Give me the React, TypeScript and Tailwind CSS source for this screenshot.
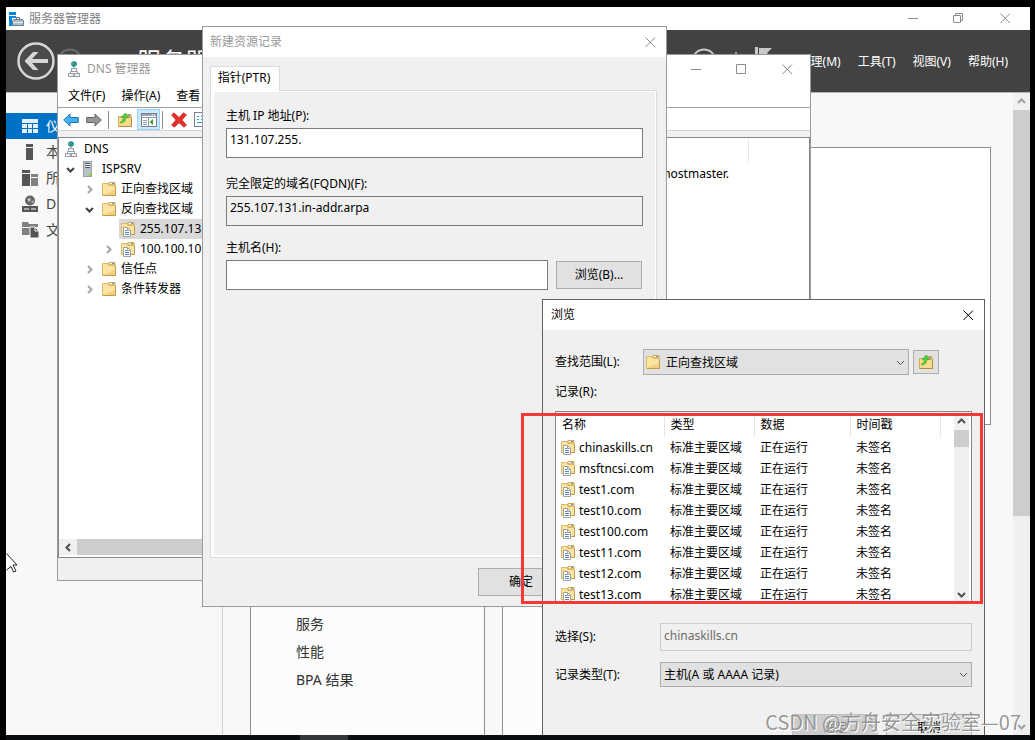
import React from 'react';
import clsx from 'clsx';

interface IconProps {
  className?: string;
}

const FolderIcon: React.FC<IconProps> = ({ className }) => (
  <svg
    viewBox="0 0 14 14"
    className={clsx('h-3.5 w-3.5 shrink-0', className)}
    aria-hidden="true"
  >
    <path d="M5.5 3L7 .5h6V3z" fill="#f0d48a" stroke="#d0aa58" />
    <rect x="8" y="1" width="4" height="1" fill="#fff" />
    <rect x="10" y="1" width="2" height="1" fill="#4c9be8" />
    <path d="M.5 13.5V1.500h5L7 3.500h6.500v10z" fill="#fbe3a2" stroke="#dcb968" />
    <path d="M1 13h12V8z" fill="#f2d080" />
    <path d="M1 13.500h12.500V4" fill="none" stroke="#c39b4c" />
  </svg>
);

const ZoneIcon: React.FC<IconProps> = ({ className }) => (
  <svg
    viewBox="0 0 14 15"
    className={clsx('h-[15px] w-3.5 shrink-0', className)}
    aria-hidden="true"
  >
    <path d="M5.500 3L7 .5h6V3z" fill="#f0d48a" stroke="#d0aa58" />
    <rect x="8" y="1" width="4" height="1" fill="#fff" />
    <rect x="10" y="1" width="2" height="1" fill="#4c9be8" />
    <path d="M.5 12.500V1.500h5L7 3.500h6.500v9z" fill="#fbe3a2" stroke="#dcb968" />
    <path d="M10 12.500h3.500V4" fill="none" stroke="#c39b4c" />
    <path d="M2.500 5.500h4l3 3v6h-7z" fill="#fff" stroke="#a0a0a0" />
    <path d="M6.500 5.500v3h3" fill="none" stroke="#a0a0a0" />
    <path d="M4 8.500h2M4 10.500h4M4 12.500h4" stroke="#4f86c6" />
  </svg>
);

const FolderUpIcon: React.FC = () => (
  <svg viewBox="0 0 16 16" className="h-4 w-4 shrink-0" aria-hidden="true">
    <path d="M8 4V2.500h6V5z" fill="#f0d48a" stroke="#d0aa58" />
    <rect x="11" y="3" width="2" height="1" fill="#4c9be8" />
    <path d="M1.500 14.500v-10h5l1 1h7v9z" fill="#f8da8c" stroke="#d0aa58" />
    <path d="M2 14.500h12.500V6" fill="none" stroke="#b38d40" />
    <path
      d="M3.500 10c2-.5 2.800-2 2.800-4.500H4L8.300 1l3.200 4.500H9c0 3-2.300 5.500-5.500 5.500z"
      fill="#4fd038"
      stroke="#2f9b1e"
      strokeWidth=".5"
    />
  </svg>
);

const NetworkIcon: React.FC = () => (
  <svg viewBox="0 0 12 16" className="h-4 w-3 shrink-0" aria-hidden="true">
    <circle cx="6" cy="3" r="2.800" fill="#1a76b8" />
    <path d="M4 1.500h3l-1 2-2 .5zM6 4l2-.8.4 1.300L7 5.500z" fill="#39c24a" />
    <path d="M6 6v2M2.500 12v-1.500h7V12" fill="none" stroke="#999" />
    <rect x="3.500" y="7.500" width="5" height="3" fill="#eef0f3" stroke="#9aa0a7" />
    <rect x=".5" y="12.500" width="5" height="3" fill="#eef0f3" stroke="#9aa0a7" />
    <rect x="6.500" y="12.500" width="5" height="3" fill="#eef0f3" stroke="#9aa0a7" />
  </svg>
);

const ServerIcon: React.FC = () => (
  <svg viewBox="0 0 9 16" className="h-4 w-[9px] shrink-0" aria-hidden="true">
    <rect x=".5" y=".5" width="8" height="15" fill="#b9c0c6" stroke="#98a1a8" />
    <path d="M2 2.500h5M2 4.500h5M2 6.500h5" stroke="#4f5961" />
    <path d="M2 3.500h5M2 5.500h5" stroke="#eef1f3" />
    <rect x="6" y="13" width="2" height="2" fill="#7be11a" />
  </svg>
);

type Direction = 'up' | 'down' | 'left' | 'right';

const chevronPaths: Record<Direction, string> = {
  up: 'M1 6l3.500-3.500L8 6',
  down: 'M1 3l3.500 3.500L8 3',
  left: 'M6 1L2.500 4.500 6 8',
  right: 'M3 1l3.500 3.500L3 8',
};

const Chevron: React.FC<{
  direction: Direction;
  color?: string;
  width?: number;
}> = ({ direction, color = '#505050', width = 2 }) => (
  <svg viewBox="0 0 9 9" className="h-[9px] w-[9px] shrink-0" aria-hidden="true">
    <path
      d={chevronPaths[direction]}
      fill="none"
      stroke={color}
      strokeWidth={width}
    />
  </svg>
);

type CaptionKind = 'minimize' | 'maximize' | 'restore' | 'close';

const captionPaths: Record<CaptionKind, string> = {
  minimize: 'M0 5.500h10',
  maximize: 'M.5.5h9v9h-9z',
  restore: 'M.5 2.500h7v7h-7zM2.500 2.500v-2h7v7h-2',
  close: 'M.5.5l9.500 9.500M10 .5L.5 10',
};

const CaptionButton: React.FC<{
  kind: CaptionKind;
  color?: string;
  className?: string;
}> = ({ kind, color = '#8c8c8c', className }) => (
  <button
    type="button"
    aria-label={kind}
    className={clsx('flex h-full items-center justify-center', className)}
  >
    <svg viewBox="0 0 11 11" className="h-[11px] w-[11px]">
      <path d={captionPaths[kind]} fill="none" stroke={color} />
    </svg>
  </button>
);

const PushButton: React.FC<{
  children: React.ReactNode;
  disabled?: boolean;
}> = ({ children, disabled }) => (
  <button
    type="button"
    disabled={disabled}
    className={clsx(
      'h-7 w-[86px] shrink-0 border',
      disabled
        ? 'border-[#bfbfbf] bg-[#cccccc] text-[#838383]'
        : 'border-[#adadad] bg-[#e1e1e1]',
    )}
  >
    {children}
  </button>
);

/* ---------- Server manager ---------- */

const navItems = [
  {
    label: '仪表板',
    icon: (
      <path
        d="M0 1h16v4H0zM0 6h5v4H0zM6 6h4v4H6zM11 6h5v4h-5zM0 11h5v4H0zM6 11h4v4H6zM11 11h5v4h-5z"
        fill="#e4f0f9"
      />
    ),
  },
  {
    label: '本地服务器',
    icon: <path d="M4 0h7v3H4zM4 4h7v12H4z" fill="#555" />,
  },
  {
    label: '所有服务器',
    icon: (
      <>
        <path d="M0 0h8v3H0zM0 4h8v12H0z" fill="#555" />
        <path d="M9 4h7v3H9zM9 8h7v8H9z" fill="#808080" />
      </>
    ),
  },
  {
    label: 'DNS',
    icon: (
      <>
        <circle cx="8" cy="4.500" r="5" fill="#666" />
        <path d="M5 3l3-1 1 2-2 2zM9 6l3-2-1 3z" fill="#c4c4c4" />
        <path d="M0 10h16v6H0z" fill="#555" />
        <path d="M2 13h5M9 13h5" stroke="#fff" />
      </>
    ),
  },
  {
    label: '文件和存储服务',
    icon: (
      <>
        <path d="M0 0h6l1 2h9v3H0zM0 6h8v7H0z" fill="#808080" />
        <path d="M8 5h5l4 4v7H8z" fill="#555" stroke="#f8f8f8" />
        <path d="M13 5v4h4" stroke="#f8f8f8" fill="none" />
      </>
    ),
  },
];

const serverMenus = ['管理(M)', '工具(T)', '视图(V)', '帮助(H)'];
const tileLinks = ['服务', '性能', 'BPA 结果'];

const ServerManagerHeader: React.FC = () => (
  <header className="flex h-[62px] shrink-0 items-center bg-[#424242] pl-[11px] pr-[22px] text-white">
    <button type="button" aria-label="后退">
      <svg viewBox="0 0 38 38" className="h-[38px] w-[38px]">
        <circle cx="19" cy="19" r="17.500" fill="#4a4a4a" stroke="#d6d6d6" strokeWidth="2.500" />
        <path
          d="M31 17v4H15l6.500 7h-5.500L7.500 19 16 10h5.500L15 17z"
          fill="#d6d6d6"
        />
      </svg>
    </button>
    <button type="button" aria-label="前进" className="ml-0.5">
      <svg viewBox="0 0 26 26" className="h-[26px] w-[26px]">
        <circle cx="13" cy="13" r="11.500" fill="none" stroke="#6a6a6a" strokeWidth="2" />
      </svg>
    </button>
    <h1 className="ml-[54px] text-[24px]">服务器管理器</h1>
    <div className="ml-auto mr-[26px] flex items-center gap-[18px]">
      <svg viewBox="0 0 26 26" className="h-[26px] w-[26px]" aria-hidden="true">
        <circle cx="13" cy="13" r="11.500" fill="none" stroke="#c8c8c8" strokeWidth="2" />
      </svg>
      <svg viewBox="0 0 38 28" className="h-7 w-[38px]" aria-hidden="true">
        <path d="M0 5h2v20H0z" fill="#9a9a9a" />
        <path d="M20 0h3v26h-3zM24 1h13l-5 5 5 5H24z" fill="#c8c8c8" />
      </svg>
    </div>
    <nav className="flex gap-[17px] pt-0.5">
      {serverMenus.map((menu) => (
        <button key={menu} type="button">
          {menu}
        </button>
      ))}
    </nav>
  </header>
);

const Tile: React.FC<{ links: string[] }> = ({ links }) => (
  <section className="w-[235px] shrink-0 border border-[#8f8f8f] bg-[#fcfcfc] pl-[45px] pt-[148px] text-sm text-[#333]">
    <ul>
      {links.map((link) => (
        <li key={link} className="h-7 leading-7">
          {link}
        </li>
      ))}
    </ul>
  </section>
);

const ServerManager: React.FC = () => (
  <div className="flex min-h-0 flex-1 flex-col bg-[#f8f8f8]">
    <div className="flex h-[23px] shrink-0 items-center bg-white text-[#808080]">
      <svg viewBox="0 0 16 16" className="ml-[3px] h-4 w-4" aria-hidden="true">
        <path d="M0 1h7v3H0zM0 5h7v2H3v8H0z" fill="#0c86d8" />
        <path d="M7.500 8V6.500h3V8" fill="none" stroke="#5c6f82" />
        <path d="M3.500 9.500l1-1h9l1 1v5h-11z" fill="#a9bccc" stroke="#6c8093" />
        <path d="M4 11.500h10" stroke="#e6edf3" />
      </svg>
      <span className="ml-1 flex-1">服务器管理器</span>
      <CaptionButton kind="minimize" className="w-[46px]" />
      <CaptionButton kind="restore" className="w-[45px]" />
      <CaptionButton kind="close" className="w-[49px]" />
    </div>
    <ServerManagerHeader />
    <div className="flex min-h-0 flex-1 border-t border-[#b5b5b5]">
      <nav className="w-[217px] shrink-0 border-r border-[#cfcfcf] pt-5">
        {navItems.map(({ label, icon }, index) => (
          <a
            key={label}
            href="#"
            className={clsx(
              'flex h-[26px] items-center gap-2 pl-4 text-sm',
              index === 0 ? 'bg-[#0072c6] text-white' : 'text-[#444]',
            )}
          >
            <svg viewBox="0 0 16 16" className="h-4 w-4 overflow-visible" aria-hidden="true">
              {icon}
            </svg>
            {label}
          </a>
        ))}
      </nav>
      <main className="min-w-0 flex-1 overflow-hidden pl-[27px] pr-[22px] pt-[54px]">
        <section className="h-[278px] border border-[#8f8f8f] bg-white" />
        <div className="mt-9 flex h-[400px] gap-[17px]">
          <Tile links={tileLinks} />
          <Tile links={[]} />
        </div>
      </main>
      <div className="flex w-[17px] shrink-0 flex-col items-center bg-[#f0f0f0]">
        <div className="flex h-[17px] items-center">
          <Chevron direction="up" color="#a0a0a0" />
        </div>
        <div className="h-[406px] w-full bg-[#cdcdcd]" />
        <div className="mt-auto flex h-[17px] items-center">
          <Chevron direction="down" color="#a0a0a0" />
        </div>
      </div>
    </div>
  </div>
);

/* ---------- DNS manager ---------- */

interface TreeRow {
  label: string;
  indent: string;
  icon: React.ReactNode;
  chevron?: 'down' | 'right';
  selected?: boolean;
}

const treeRows: TreeRow[] = [
  {
    label: 'ISPSRV',
    indent: 'pl-[7px]',
    icon: <ServerIcon />,
    chevron: 'down',
  },
  {
    label: '正向查找区域',
    indent: 'pl-[26px]',
    icon: <FolderIcon />,
    chevron: 'right',
  },
  {
    label: '反向查找区域',
    indent: 'pl-[26px]',
    icon: <FolderIcon />,
    chevron: 'down',
  },
  {
    label: '255.107.13',
    indent: 'pl-[45px]',
    icon: <ZoneIcon />,
    selected: true,
  },
  {
    label: '100.100.10',
    indent: 'pl-[45px]',
    icon: <ZoneIcon />,
    chevron: 'right',
  },
  {
    label: '信任点',
    indent: 'pl-[26px]',
    icon: <FolderIcon />,
    chevron: 'right',
  },
  {
    label: '条件转发器',
    indent: 'pl-[26px]',
    icon: <FolderIcon />,
    chevron: 'right',
  },
];

const DnsTree: React.FC = () => (
  <div className="flex w-[200px] shrink-0 flex-col border border-[#828790] bg-white">
    <ul className="flex-1 overflow-hidden whitespace-nowrap pt-px">
      <li className="flex h-5 items-center gap-[7px] pl-[6px]">
        <NetworkIcon />
        DNS
      </li>
      {treeRows.map(({ label, indent, icon, chevron, selected }) => (
        <li key={label} className={clsx('flex h-5 items-center', indent)}>
          <span className="w-[15px] shrink-0">
            {chevron && (
              <Chevron
                direction={chevron}
                color={chevron === 'down' ? '#404040' : '#a6a6a6'}
              />
            )}
          </span>
          <span
            className={clsx(
              'flex h-5 flex-1 items-center pl-px',
              selected && 'bg-[#d9d9d9]',
            )}
          >
            <span className="flex w-5 shrink-0 items-center pl-px">{icon}</span>
            {label}
          </span>
        </li>
      ))}
    </ul>
    <div className="mb-0.5 flex h-4 items-center bg-[#f0f0f0]">
      <div className="flex w-[18px] justify-center">
        <Chevron direction="left" />
      </div>
      <div className="h-full flex-1 bg-[#cdcdcd]" />
    </div>
  </div>
);

const DnsToolbar: React.FC = () => (
  <div className="flex h-6 items-center border-y border-t-[#a0a0a0] border-b-[#d5d5d5] pl-[5px] pt-px">
    <button type="button" aria-label="后退">
      <svg viewBox="0 0 16 14" className="h-3.5 w-4">
        <path d="M.7 7L7 1v3.500h8.300v5H7V13z" fill="#45b0ee" stroke="#1d6fb0" />
      </svg>
    </button>
    <button type="button" aria-label="前进" className="ml-[7px]">
      <svg viewBox="0 0 16 14" className="h-3.5 w-4">
        <path d="M15.300 7L9 1v3.500H.7v5H9V13z" fill="#969696" stroke="#666" />
      </svg>
    </button>
    <div className="ml-1.5 h-[18px] w-px bg-[#8c8c8c]" />
    <button type="button" aria-label="上移一级" className="ml-2">
      <FolderUpIcon />
    </button>
    <button
      type="button"
      aria-label="显示控制台树"
      className="ml-[4px] flex h-[21px] w-[23px] items-center justify-center border border-[#99d1ff] bg-[#cce8ff]"
    >
      <svg viewBox="0 0 16 14" className="h-3.5 w-4">
        <rect x=".5" y=".5" width="15" height="13" fill="#fff" stroke="#77818b" />
        <path d="M1 2h14" stroke="#9aa5b0" strokeWidth="2" />
        <path d="M11 2h1M13 2h1" stroke="#fff" />
        <path d="M7.500 5v8M1 4.500h14" stroke="#8c959e" />
        <path d="M2 7.500h4M2 9.500h4M2 11.500h4" stroke="#8aa0b5" />
        <path d="M12 6v6L8.500 9z" fill="#35a41f" />
      </svg>
    </button>
    <div className="ml-0.5 h-[18px] w-px bg-[#8c8c8c]" />
    <button type="button" aria-label="删除" className="ml-2">
      <svg viewBox="0 0 16 16" className="h-4 w-4">
        <path
          d="M.5 3L3 .8l5 4.700 4.500-4.700 3 2L11 8l4.500 5-2.500 2.200L8 10.700l-4.500 4.500L.5 13 5 8z"
          fill="#e3302a"
          stroke="#c01a14"
          strokeWidth=".6"
        />
      </svg>
    </button>
    <button type="button" aria-label="属性" className="ml-[7px]">
      <svg viewBox="0 0 14 16" className="h-4 w-3.5">
        <rect x=".5" y=".5" width="13" height="14" fill="#fff" stroke="#77818b" />
        <path d="M3 4.500h2M7 4.500h4M3 7.500h2M7 7.500h4" stroke="#2f9fd0" />
        <path d="M3 10.500h8" stroke="#2f9fd0" />
      </svg>
    </button>
  </div>
);

const DnsManager: React.FC = () => (
  <div className="absolute left-[57px] top-[54px] flex h-[527px] w-[754px] flex-col border border-[#9b9b9b] bg-white">
    <div className="flex h-7 shrink-0 items-center pl-2.5 text-[#999]">
      <NetworkIcon />
      <span className="ml-[7px] flex-1">DNS 管理器</span>
      <CaptionButton kind="minimize" className="w-[45px]" />
      <CaptionButton kind="maximize" className="w-[45px]" />
      <CaptionButton kind="close" className="w-[46px]" />
    </div>
    <nav className="flex h-6 shrink-0 items-center gap-4 pl-2.5 pt-0.5">
      <button type="button">文件(F)</button>
      <button type="button">操作(A)</button>
      <button type="button">查看</button>
    </nav>
    <DnsToolbar />
    <div className="flex min-h-0 flex-1 gap-1 bg-[#f0f0f0] pt-1.5">
      <DnsTree />
      <div className="flex-1 border border-[#828790] bg-white">
        <div className="mr-[60px] mt-px h-6 border-r border-[#e5e5e5]" />
        <div className="pr-20 pt-px text-right leading-5">hostmaster.</div>
      </div>
    </div>
    <div className="h-[22px] shrink-0 bg-[#f0f0f0]" />
  </div>
);

/* ---------- New resource record ---------- */

const NewRecordDialog: React.FC = () => (
  <form className="absolute left-[202px] top-[26px] flex h-[581px] w-[465px] flex-col border border-[#9b9b9b] bg-[#f0f0f0]">
    <div className="flex h-[30px] shrink-0 items-center bg-white pl-[7px] text-[#999]">
      <h2 className="flex-1">新建资源记录</h2>
      <CaptionButton kind="close" className="w-[31px]" />
    </div>
    <div className="flex min-h-0 flex-1 flex-col pl-[7px] pr-[9px] pt-[9px]">
      <button
        type="button"
        role="tab"
        className="relative -mb-px h-[25px] w-[70px] border border-b-0 border-[#dcdcdc] bg-white pr-0.5 pb-0.5"
      >
        指针(PTR)
      </button>
      <div className="flex-1 border border-[#dcdcdc] bg-white pb-0.5 pl-[3px] pr-px pt-px">
        <div className="h-full bg-[#f0f0f0] pl-3 pr-3 pt-[14px]">
          <label htmlFor="host-ip" className="block h-[22px] leading-5">
            主机 IP 地址(P):
          </label>
          <input
            id="host-ip"
            defaultValue="131.107.255."
            className="block h-[30px] w-full border border-[#7a7a7a] bg-white pb-2 pl-[3px]"
          />
          <label htmlFor="fqdn" className="mt-4 block h-[22px] leading-5">
            完全限定的域名(FQDN)(F):
          </label>
          <input
            id="fqdn"
            readOnly
            defaultValue="255.107.131.in-addr.arpa"
            className="block h-[30px] w-full border border-[#7a7a7a] bg-[#f0f0f0] pb-2 pl-[3px]"
          />
          <label htmlFor="host-name" className="mt-3 block h-[22px] leading-5">
            主机名(H):
          </label>
          <div className="flex items-center gap-2 pr-px">
            <input
              id="host-name"
              className="block h-[30px] min-w-0 flex-1 border border-[#7a7a7a] bg-white pl-[3px]"
            />
            <PushButton>浏览(B)...</PushButton>
          </div>
        </div>
      </div>
    </div>
    <div className="h-12 shrink-0 pl-[275px] pt-2.5">
      <PushButton>确定</PushButton>
    </div>
  </form>
);

/* ---------- Browse ---------- */

const records = [
  'chinaskills.cn',
  'msftncsi.com',
  'test1.com',
  'test10.com',
  'test100.com',
  'test11.com',
  'test12.com',
  'test13.com',
];

const columns = [
  { label: '名称', width: 'w-[108px]' },
  { label: '类型', width: 'w-[90px]' },
  { label: '数据', width: 'w-24' },
  { label: '时间戳', width: 'w-[90px]' },
];

const RecordList: React.FC = () => (
  <div className="mt-[9px] flex h-[193px] overflow-hidden border border-[#828790] bg-white">
    <div className="flex-1">
      <table className="w-[384px] table-fixed text-left">
        <thead>
          <tr className="h-[25px]">
            {columns.map(({ label, width }) => (
              <th
                key={label}
                className={clsx(
                  'border-r border-[#e5e5e5] p-0 pl-1.5 font-normal',
                  width,
                )}
              >
                {label}
              </th>
            ))}
          </tr>
        </thead>
        <tbody>
          {records.map((name) => (
            <tr key={name} className="h-[21px] leading-5">
              <td className="p-0 pl-[5px]">
                <div className="flex items-center gap-1">
                  <ZoneIcon />
                  {name}
                </div>
              </td>
              <td className="p-0 pl-1.5">标准主要区域</td>
              <td className="p-0 pl-1.5">正在运行</td>
              <td className="p-0 pl-1.5">未签名</td>
            </tr>
          ))}
        </tbody>
      </table>
    </div>
    <div className="mr-0.5 flex w-[15px] flex-col items-center bg-[#f0f0f0] pb-1">
      <div className="flex h-[18px] items-center">
        <Chevron direction="up" />
      </div>
      <div className="h-[17px] w-full bg-[#cdcdcd]" />
      <div className="mt-auto">
        <Chevron direction="down" />
      </div>
    </div>
  </div>
);

const BrowseDialog: React.FC = () => (
  <form className="absolute left-[542px] top-[299px] w-[443px] border border-[#606060] bg-[#f0f0f0]">
    <div className="flex h-[30px] items-center bg-white pl-2">
      <h2 className="flex-1">浏览</h2>
      <CaptionButton kind="close" color="#000" className="w-[31px]" />
    </div>
    <div className="px-3 pb-3 pt-[19px]">
      <div className="flex items-center pr-[33px]">
        <label htmlFor="look-in" className="w-[88px]">
          查找范围(L):
        </label>
        <div className="relative flex-1">
          <select
            id="look-in"
            className="block h-[26px] w-full appearance-none border border-[#adadad] bg-[#e1e1e1] pl-[22px] pt-px"
          >
            <option>正向查找区域</option>
          </select>
          <span className="pointer-events-none absolute inset-0 flex items-center justify-between pl-[3px] pr-1">
            <FolderIcon />
            <Chevron direction="down" width={1} />
          </span>
        </div>
        <button
          type="button"
          aria-label="向上一级"
          className="ml-1 flex h-6 w-[26px] items-center justify-center border border-[#adadad] bg-[#e1e1e1]"
        >
          <FolderUpIcon />
        </button>
      </div>
      <div className="mt-[7px] leading-5">记录(R):</div>
      <RecordList />
      <div className="mt-[19px] flex items-center">
        <label htmlFor="selection" className="w-[105px]">
          选择(S):
        </label>
        <input
          id="selection"
          disabled
          defaultValue="chinaskills.cn"
          className="h-7 min-w-0 flex-1 border border-[#cccccc] bg-[#f0f0f0] pb-1 pl-[3px] text-[#6d6d6d]"
        />
      </div>
      <div className="mt-[11px] flex items-center">
        <label htmlFor="record-type" className="w-[105px]">
          记录类型(T):
        </label>
        <div className="relative flex-1">
          <select
            id="record-type"
            className="block h-[25px] w-full appearance-none border border-[#adadad] bg-[#e1e1e1] pl-[3px]"
          >
            <option>主机(A 或 AAAA 记录)</option>
          </select>
          <span className="pointer-events-none absolute inset-y-0 right-1 flex items-center">
            <Chevron direction="down" width={1} />
          </span>
        </div>
      </div>
      <div className="mt-[27px] flex justify-end gap-2">
        <PushButton disabled>确定</PushButton>
        <PushButton>取消</PushButton>
      </div>
    </div>
  </form>
);

const App: React.FC = () => (
  <div className="relative flex h-screen flex-col overflow-hidden bg-black pl-1.5 pr-[5px] pt-[7px] font-['Noto_Sans','Noto_Sans_CJK_SC',sans-serif] text-xs text-black">
    <ServerManager />
    <DnsManager />
    <NewRecordDialog />
    <BrowseDialog />

    {/* taskbar edge, stays above the windows */}
    <div className="relative h-[5px] shrink-0 bg-[#0a0d12] pl-[294px]">
      <div className="h-full w-12 bg-[#33363a]" />
    </div>

    {/* highlight frame around the record list */}
    <div className="pointer-events-none absolute left-[521px] top-[413px] h-[191px] w-[462px] border-3 border-[#fb3636]" />

    <svg
      viewBox="0 0 12 20"
      className="absolute left-[6px] top-[553px] h-5 w-3"
      aria-hidden="true"
    >
      <path
        d="M.5.5l10.500 11.500H7l3 6-2.500 1L5 13.500.5 17"
        fill="#fff"
        stroke="#222"
      />
    </svg>

    <p className="pointer-events-none absolute bottom-1 right-[14px] font-['Noto_Sans_CJK_SC',sans-serif] text-xl text-[#8c8c8c]/90 [text-shadow:1px_1px_0_#ffffff]">
      CSDN @方舟安全实验室—07
    </p>
  </div>
);

export default App;
